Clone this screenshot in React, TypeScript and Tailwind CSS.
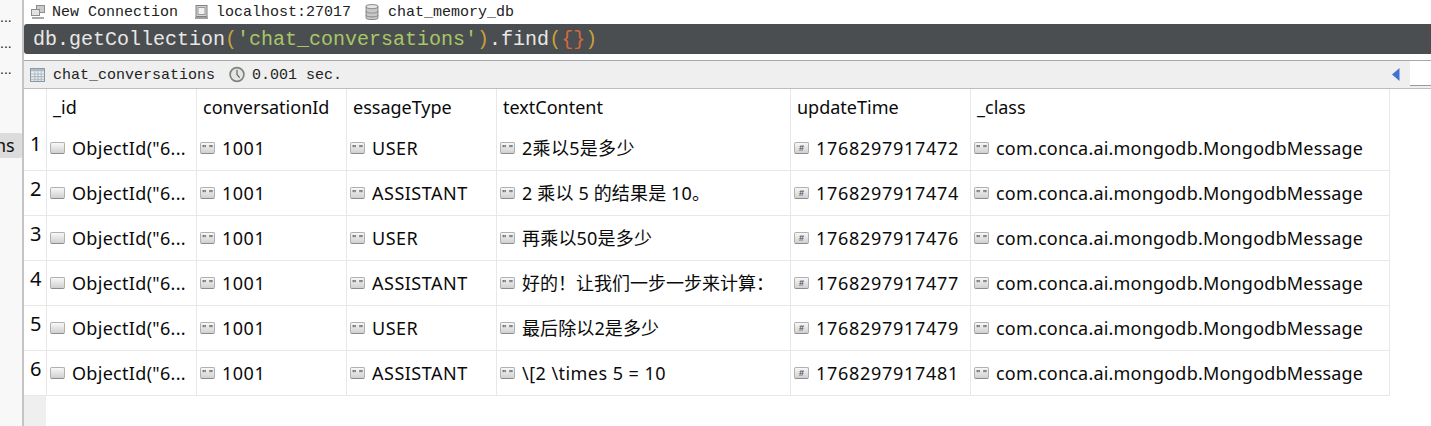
import React from 'react';

// --- Table data ---
type Row = { type: string; text: string; time: string; track: string };

const rows: Row[] = [
    { type: 'USER', text: '2乘以5是多少', time: '1768297917472', track: 'tracking-[0.3px]' },
    { type: 'ASSISTANT', text: '2 乘以 5 的结果是 10。', time: '1768297917474', track: 'tracking-[0.15px]' },
    { type: 'USER', text: '再乘以50是多少', time: '1768297917476', track: 'tracking-[0.2px]' },
    { type: 'ASSISTANT', text: '好的！让我们一步一步来计算：', time: '1768297917477', track: '' },
    { type: 'USER', text: '最后除以2是多少', time: '1768297917479', track: 'tracking-[0.1px]' },
    { type: 'ASSISTANT', text: '\\[2 \\times 5 = 10', time: '1768297917481', track: 'tracking-[0.45px]' },
];

const headers = ['_id', 'conversationId', 'essageType', 'textContent', 'updateTime', '_class'];

const gridCols = 'grid grid-cols-[22px_150px_150px_150px_294px_180px_420px] w-[1366px]';
const cellFont = "font-['Noto_Sans','Noto_Sans_CJK_SC',sans-serif]";
const monoFont = "font-['Liberation_Mono',monospace]";

// --- Small type badge in front of each cell ---
const TypeBadge: React.FC<{ mark?: string }> = ({ mark }) => (
    <span className="flex h-[12px] w-[15px] shrink-0 items-start justify-center rounded-[2px] border border-[#b0b0b0] border-b-[#8c8c8c] bg-gradient-to-b from-[#f8f8f8] to-[#d0d0d0] text-[9px] leading-[10px] font-bold text-[#555] font-['Liberation_Sans',sans-serif]">
        {mark}
    </span>
);

const Cell: React.FC<{ mark?: string; text: string; track?: string }> = ({ mark, text, track = '' }) => (
    <div className="flex h-[45px] items-center gap-[7px] border-b border-l border-[#e8e8e8] pl-[3px]">
        <TypeBadge mark={mark} />
        <span className={`whitespace-nowrap text-[18px] leading-[24px] text-[#0a0a0a] ${track}`}>{text}</span>
    </div>
);

// --- Toolbar icons ---
const ConnectionIcon = () => (
    <svg width="14" height="15" viewBox="0 0 14 15" className="shrink-0">
        <rect x="5.500" y="0.500" width="8" height="7" fill="#c9c9c9" stroke="#8d8d8d" />
        <rect x="0.500" y="4.500" width="8" height="6" fill="#e2e2e2" stroke="#8d8d8d" />
        <rect x="1" y="12" width="12" height="2" fill="#a9a9a9" />
    </svg>
);

const ServerIcon = () => (
    <svg width="13" height="15" viewBox="0 0 13 15" className="shrink-0">
        <rect x="1" y="0.500" width="11" height="11" fill="#d5d5d5" stroke="#808080" />
        <rect x="3" y="2.500" width="7" height="7" fill="#f1f1f1" stroke="#9a9a9a" />
        <rect x="0" y="12" width="13" height="2" fill="#a0a0a0" />
    </svg>
);

const DatabaseIcon = () => (
    <svg width="14" height="18" viewBox="0 0 13 16" className="shrink-0">
        <path d="M1 3v10c0 1.200 2.400 2 5.500 2s5.500-.8 5.500-2V3" fill="#c8c8c8" stroke="#8f8f8f" />
        <ellipse cx="6.500" cy="3" rx="5.500" ry="2" fill="#e6e6e6" stroke="#8f8f8f" />
        <path d="M1 7c0 1.200 2.400 2 5.500 2s5.500-.8 5.500-2M1 10.500c0 1.200 2.400 2 5.500 2s5.500-.8 5.500-2" fill="none" stroke="#8f8f8f" />
    </svg>
);

const TableIcon = () => (
    <svg width="15" height="14" viewBox="0 0 14 13" className="shrink-0">
        <rect x="0.500" y="0.500" width="13" height="12" fill="#eef2f6" stroke="#8a96a3" />
        <rect x="1" y="1" width="12" height="2" fill="#a9b6c4" />
        <path d="M4.500 3v9M7.500 3v9M10.500 3v9M1 5.500h12M1 8h12M1 10.500h12" stroke="#aeb8c2" strokeWidth="1" fill="none" />
    </svg>
);

const ClockIcon = () => (
    <svg width="16" height="17" viewBox="0 0 15 16" className="shrink-0">
        <circle cx="7.500" cy="8" r="6.500" fill="#e3e6e3" stroke="#7d857d" strokeWidth="1.600" />
        <path d="M7.500 3.500V8l2.500 3" fill="none" stroke="#555" strokeWidth="1" />
    </svg>
);

const App: React.FC = () => {
    return (
        <div className="flex h-[426px] w-[1431px] overflow-hidden bg-white">
            {/* Cut-off tree on the left */}
            <aside className="flex w-[24px] shrink-0 flex-col overflow-hidden border-r-2 border-[#c4c4c4] bg-[#f8f8f8]">
                <div className="flex h-[133px] flex-col pt-[4px] text-[14px] leading-[26px] text-[#222] font-['Liberation_Sans',sans-serif]">
                    <span>...</span>
                    <span>...</span>
                    <span>...</span>
                </div>
                <div className="flex h-[25px] items-center rounded-r-[2px] bg-[#dcdcdc] text-[18px] text-[#111] font-['Noto_Sans',sans-serif]">
                    <span className="ml-[-5px]">ns</span>
                </div>
            </aside>

            <main className="flex min-w-0 flex-1 flex-col">
                {/* Connection breadcrumb */}
                <div className={`flex h-[24px] items-center pl-[7px] text-[15px] text-[#222] ${monoFont}`}>
                    <ConnectionIcon />
                    <span className="ml-[7px] pt-[2px]">New Connection</span>
                    <span className="ml-[17px]"><ServerIcon /></span>
                    <span className="ml-[8px] pt-[2px]">localhost:27017</span>
                    <span className="ml-[14px]"><DatabaseIcon /></span>
                    <span className="ml-[9px] pt-[2px]">chat_memory_db</span>
                </div>

                {/* Query editor */}
                <div className={`flex h-[30px] items-center rounded-l-[3px] bg-[#4b4e50] pl-[9px] pt-[1px] text-[20px] leading-none text-[#e8e8e8] ${monoFont}`}>
                    <span>db.getCollection</span>
                    <span className="text-[#c9a23c]">(</span>
                    <span className="text-[#a8c767]">'chat_conversations'</span>
                    <span className="text-[#c9a23c]">)</span>
                    <span>.find</span>
                    <span className="text-[#c9a23c]">(</span>
                    <span className="text-[#d8683c]">{'{}'}</span>
                    <span className="text-[#c9a23c]">)</span>
                </div>

                {/* Result toolbar */}
                <div className={`mt-[6px] flex h-[29px] items-center border-y border-[#bdbdbd] border-t-[#a8a8a8] bg-[#efefef] pl-[6px] text-[15px] text-[#222] ${monoFont}`}>
                    <TableIcon />
                    <span className="ml-[8px] pt-[4px]">chat_conversations</span>
                    <span className="ml-[14px]"><ClockIcon /></span>
                    <span className="ml-[7px] pt-[4px]">0.001 sec.</span>
                    <div className="ml-auto flex h-full items-center">
                        <svg width="8" height="13" viewBox="0 0 8 13">
                            <path d="M7.500 0v13L0 6.500z" fill="#3f74d6" />
                        </svg>
                        <div className="ml-[10px] h-[25px] w-[21px] self-start border-b border-[#9a9a9a] bg-white" />
                    </div>
                </div>

                {/* Results table */}
                <div className={`flex flex-1 flex-col ${cellFont}`}>
                    <div className={gridCols}>
                        <div className="h-[37px]" />
                        {headers.map(h => (
                            <div key={h} className="h-[37px] border-l border-[#e8e8e8] pl-[6px] pt-[5px] text-[18px] leading-[26px] text-[#0a0a0a] last:border-r">
                                {h}
                            </div>
                        ))}
                    </div>
                    {rows.map((row, i) => (
                        <div key={row.time} className={gridCols}>
                            <div className="h-[45px] border-b border-[#e8e8e8] pl-[6px] pt-[5px] text-[20px] leading-[26px] text-[#0a0a0a]">
                                {i + 1}
                            </div>
                            <Cell text={'ObjectId("6...'} track="tracking-[0.3px]" />
                            <Cell mark={'" "'} text="1001" track="tracking-[0.5px]" />
                            <Cell mark={'" "'} text={row.type} track="tracking-[0.5px]" />
                            <Cell mark={'" "'} text={row.text} track={row.track} />
                            <Cell mark="#" text={row.time} track="tracking-[0.7px]" />
                            <div className="border-r border-[#e8e8e8]">
                                <Cell mark={'" "'} text="com.conca.ai.mongodb.MongodbMessage" track="tracking-[0.2px]" />
                            </div>
                        </div>
                    ))}
                    <div className="w-[22px] flex-1 bg-[#efefef]" />
                </div>
            </main>
        </div>
    );
};

export default App;
